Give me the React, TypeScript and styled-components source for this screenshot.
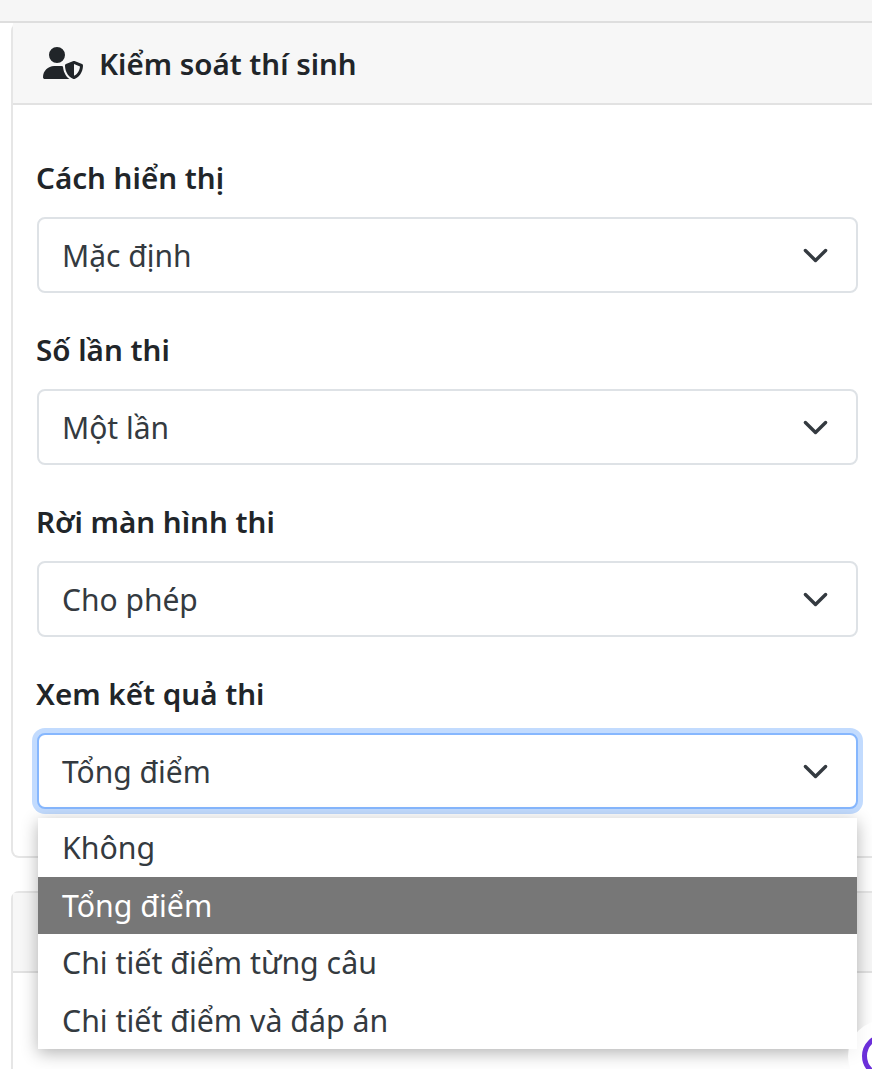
import React from 'react'
import styled, { createGlobalStyle } from 'styled-components'
import { FaUserShield } from 'react-icons/fa6'

const fields = [
  { label: 'Cách hiển thị', value: 'Mặc định' },
  { label: 'Số lần thi', value: 'Một lần' },
  { label: 'Rời màn hình thi', value: 'Cho phép' },
  { label: 'Xem kết quả thi', value: 'Tổng điểm', open: true },
]

const options = ['Không', 'Tổng điểm', 'Chi tiết điểm từng câu', 'Chi tiết điểm và đáp án']

const Chevron = () => (
  <svg width="27" height="27" viewBox="0 0 16 16" fill="none">
    <path d="m2 5 6 6 6-6" stroke="#343a40" strokeWidth="2" strokeLinecap="round" strokeLinejoin="round" />
  </svg>
)

const App: React.FC = () => {
  return (
    <Page>
      <GlobalStyle />
      <TopStrip />
      <Card>
        <CardHeader>
          <FaUserShield size={40} />
          <CardTitle>Kiểm soát thí sinh</CardTitle>
        </CardHeader>
        <CardBody>
          {fields.map((f) => (
            <Field key={f.label}>
              <Label>{f.label}</Label>
              <Select data-open={f.open ? 'true' : 'false'}>
                {f.value}
                <Chevron />
              </Select>
              {f.open && (
                <Menu>
                  {options.map((o) => (
                    <Option key={o} data-selected={o === f.value ? 'true' : 'false'}>
                      {o}
                    </Option>
                  ))}
                </Menu>
              )}
            </Field>
          ))}
        </CardBody>
      </Card>
      <NextCard>
        <NextHeader />
      </NextCard>
      <FloatButton />
    </Page>
  )
}

const GlobalStyle = createGlobalStyle`
  html, body {
    margin: 0;
    padding: 0;
    background: #ffffff;
    overflow: hidden;
  }
  * {
    box-sizing: border-box;
  }
`
const Page = styled.div`
  position: relative;
  width: 872px;
  height: 1069px;
  overflow: hidden;
  font-family: "Noto Sans", "Open Sans", sans-serif;
  color: #212529;
`
const TopStrip = styled.div`
  height: 23px;
  background-color: #f6f6f6;
  border-bottom: 2px solid #dedede;
`
const Card = styled.div`
  width: 880px;
  margin-left: 11px;
  border: 2px solid #e6e6e6;
  border-top: none;
  border-radius: 8px 0 0 8px;
`
const CardHeader = styled.div`
  height: 82px;
  padding-left: 30px;
  display: flex;
  align-items: center;
  gap: 16px;
  background-color: #f7f7f7;
  border-bottom: 2px solid #e2e2e2;
  color: #212529;
`
const CardTitle = styled.h2`
  margin: 0;
  font-size: 29.5px;
  font-weight: 600;
`
const CardBody = styled.div`
  padding: 52px 0 47px 24px;
  display: flex;
  flex-direction: column;
  gap: 36px;
`
const Field = styled.div`
  position: relative;
  width: 821px;
`
const Label = styled.div`
  height: 42px;
  margin-bottom: 18px;
  margin-left: -1px;
  font-size: 29.6px;
  line-height: 42px;
  font-weight: 600;
`
const Select = styled.div`
  height: 76px;
  padding: 0 27px 0 23px;
  display: flex;
  align-items: center;
  justify-content: space-between;
  background: #ffffff;
  border: 2px solid #dee2e6;
  border-radius: 8px;
  font-size: 30px;
  color: #343a40;
  &[data-open='true'] {
    border-color: #86b7fe;
    box-shadow: 0 0 0 5px #c2dbfe;
  }
`
const Menu = styled.div`
  position: absolute;
  z-index: 2;
  left: 1px;
  right: 1px;
  top: 145px;
  padding-top: 1px;
  background: #ffffff;
  box-shadow: 0 4px 16px rgba(0, 0, 0, 0.3);
`
const Option = styled.div`
  height: 57.6px;
  padding-left: 24px;
  display: flex;
  align-items: center;
  font-size: 30.3px;
  color: #343a40;
  &[data-selected='true'] {
    background-color: #777777;
    color: #ffffff;
  }
`
const NextCard = styled.div`
  width: 880px;
  height: 300px;
  margin: 33px 0 0 11px;
  border: 2px solid #e6e6e6;
  border-radius: 8px 0 0 0;
`
const NextHeader = styled.div`
  height: 80px;
  background-color: #f7f7f7;
  border-bottom: 2px solid #e2e2e2;
`
const FloatButton = styled.div`
  position: absolute;
  z-index: 3;
  left: 862px;
  top: 1034px;
  width: 44px;
  height: 44px;
  border-radius: 50%;
  background: #ffffff;
  border: 5px solid #6b2fd9;
  box-shadow: 0 0 0 14px rgba(255, 255, 255, 0.8);
`

export default App
